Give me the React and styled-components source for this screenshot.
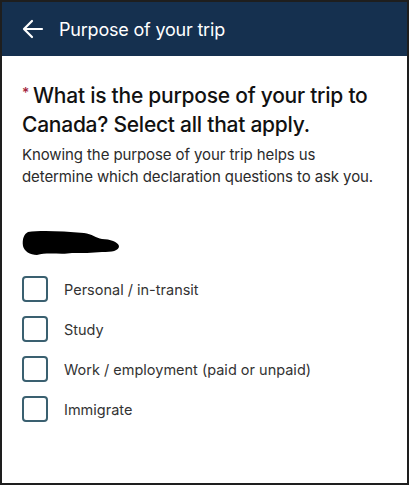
import React from 'react'
import styled, { createGlobalStyle } from 'styled-components'

const GlobalStyle = createGlobalStyle`
  body {
    margin: 0;
    background: #fff;
    font-family: Inter, "Liberation Sans", sans-serif;
  }
`

const Frame = styled.div`
  width: 409px;
  height: 485px;
  box-sizing: border-box;
  border: 2px solid #1e1e1e;
  background: #fff;
  display: flex;
  flex-direction: column;
`

const Header = styled.header`
  height: 54px;
  background: #15304f;
  display: flex;
  align-items: center;
  gap: 15px;
  padding-left: 20px;
  color: #fff;
`

const BackButton = styled.button`
  border: none;
  background: none;
  padding: 0;
  display: flex;
  cursor: pointer;
`

const HeaderTitle = styled.h1`
  margin: 0;
  font-size: 18px;
  font-weight: 400;
  letter-spacing: -0.2px;
`

const Content = styled.main`
  padding: 25px 20px 0;
`

const Question = styled.h2`
  margin: 0;
  font-size: 21px;
  line-height: 29px;
  font-weight: 500;
  color: #111;
  letter-spacing: -0.25px;

  &::before {
    content: ${({ $required }) => ($required ? '"*"' : 'none')};
    color: #a3243b;
    font-size: 14px;
    line-height: 0;
    vertical-align: 5px;
    margin-right: 4px;
  }
`

const Hint = styled.p`
  margin: 5px 0 0;
  font-size: 15px;
  line-height: 22px;
  color: #2b2b2b;
  letter-spacing: -0.1px;
`

const Redacted = styled.svg`
  display: block;
  margin: 42px 0 20px;
`

const Options = styled.div`
  display: flex;
  flex-direction: column;
  gap: 14px;
`

const Option = styled.label`
  display: flex;
  align-items: center;
  gap: 16px;
  font-size: 14.5px;
  color: #333;
  cursor: pointer;
`

const Box = styled.span`
  width: 26px;
  height: 26px;
  box-sizing: border-box;
  border: 2px solid #3a6070;
  border-radius: 4px;
  flex-shrink: 0;
`

const options = [
  'Personal / in-transit',
  'Study',
  'Work / employment (paid or unpaid)',
  'Immigrate',
]

const App = () => {
  return (
    <>
      <GlobalStyle />
      <Frame>
        <Header>
          <BackButton aria-label="Back">
            <svg width="22" height="20" viewBox="0 0 22 20" fill="none" stroke="#fff" strokeWidth="2.2" strokeLinecap="round" strokeLinejoin="round">
              <path d="M20 10H2.5M10 2L2 10l8 8" />
            </svg>
          </BackButton>
          <HeaderTitle>Purpose of your trip</HeaderTitle>
        </Header>
        <Content>
          <Question $required>
            What is the purpose of your trip to Canada? Select all that apply.
          </Question>
          <Hint>Knowing the purpose of your trip helps us determine which declaration questions to ask you.</Hint>
          <Redacted width="98" height="26" viewBox="0 0 98 26">
            <path
              d="M6 2 C18 0 40 1 62 3 C70 4 74 8 80 9 C88 9 96 12 97 16 C97 21 90 22 80 22 C70 23 60 23 50 23 C40 25 25 22 15 25 C8 25 2 21 1 16 C0 9 2 4 6 2 Z"
              fill="#000"
            />
          </Redacted>
          <Options>
            {options.map((o) => (
              <Option key={o}>
                <Box />
                {o}
              </Option>
            ))}
          </Options>
        </Content>
      </Frame>
    </>
  )
}

export default App
